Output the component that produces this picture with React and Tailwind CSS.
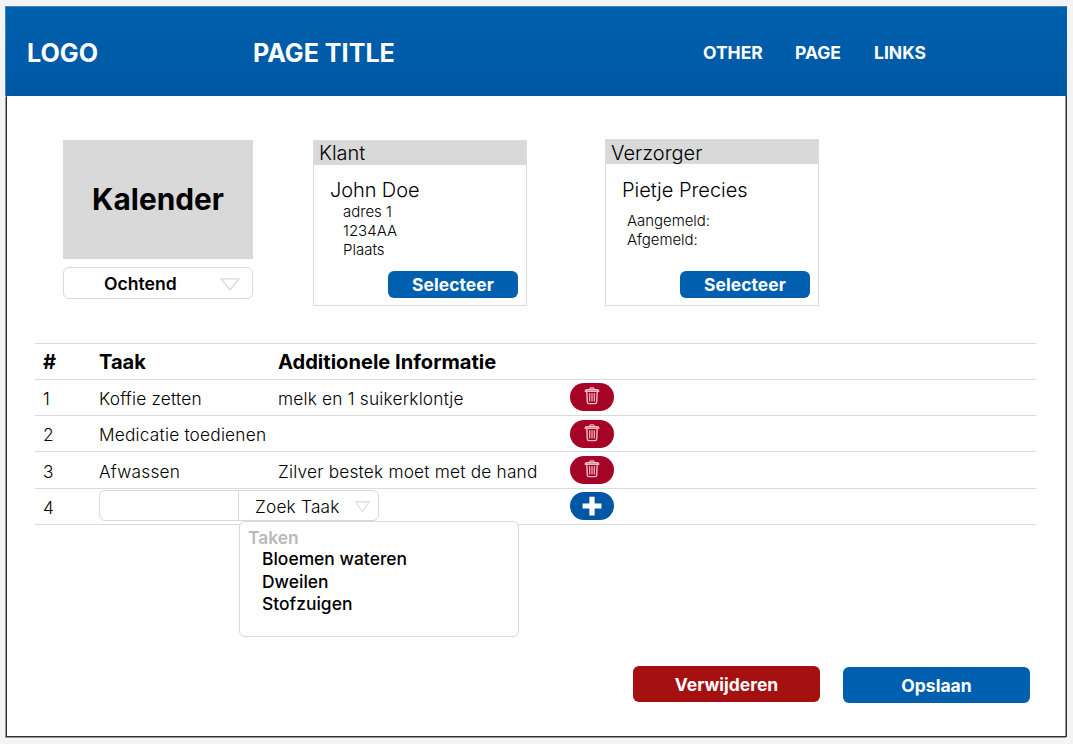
function TriangleDown({ className }) {
  return (
    <svg className={className} viewBox="0 0 20 13" fill="none" stroke="#d9d9d9" strokeWidth="1.3" preserveAspectRatio="none">
      <path d="M1.2 .9H18.8L10 12z" />
    </svg>
  );
}

function TrashIcon() {
  return (
    <svg className="block h-[18px] w-4" viewBox="0 0 16 18" fill="none" stroke="#efbcc7" strokeWidth="1.4" strokeLinecap="round" strokeLinejoin="round">
      <path d="M1.2 4.2C1.2 3 2 2.6 3 2.6H13C14 2.6 14.8 3 14.8 4.2Z" />
      <path d="M5.8 2.4C5.8 1.3 6.3 .9 7 .9H9C9.7 .9 10.2 1.3 10.2 2.4" />
      <path d="M2.8 4.4L3.3 15C3.4 16.2 4 16.6 5 16.6H11C12 16.6 12.6 16.2 12.7 15L13.2 4.4" />
      <path strokeWidth="1.2" d="M5.7 6.6V14M8 6.6V14M10.3 6.6V14" />
    </svg>
  );
}

function DeleteButton({ className }) {
  return (
    <button className={`flex h-7 w-11 items-start justify-center rounded-full bg-[#a50427] pt-1 ${className}`}>
      <TrashIcon />
    </button>
  );
}

function AddButton() {
  return (
    <button className="mt-[3px] flex h-7 w-11 items-center justify-center rounded-full bg-[#0157a6]">
      <svg className="block size-5" viewBox="0 0 20 20" fill="#fff">
        <path d="M7.4 .8H12.6V7.6H19.4V12.6H12.6V19.4H7.4V12.6H.6V7.6H7.4Z" />
      </svg>
    </button>
  );
}

function Card({ title, name, lines, className, nameClass, linesClass }) {
  return (
    <section className={`flex flex-col border border-[#dcdcdc] ${className}`}>
      <h2 className="h-6 bg-[#d9d9d9] pl-[5px] text-[20px] font-light">{title}</h2>
      <p className={`text-[20px] leading-6 font-light ${nameClass}`}>{name}</p>
      <div className={`text-[15px] leading-[19px] font-light ${linesClass}`}>
        {lines.map((line) => (
          <p key={line}>{line}</p>
        ))}
      </div>
      <button className="mt-auto mr-2 mb-[7px] h-[27px] w-[130px] self-end rounded-md bg-[#005faf] text-[17.4px] leading-[28px] font-bold tracking-[.1px] text-white">
        Selecteer
      </button>
    </section>
  );
}

const tasks = [
  { id: 1, task: "Koffie zetten", info: "melk en 1 suikerklontje", row: "h-9 leading-[37px]", button: "mt-[3px]" },
  { id: 2, task: "Medicatie toedienen", info: "", row: "h-9 leading-[37px]", button: "mt-1" },
  { id: 3, task: "Afwassen", info: "Zilver bestek moet met de hand", row: "h-[37px] leading-[39px]", button: "mt-1" },
];

const columns = "grid grid-cols-[64px_179px_292px_1fr] border-t border-[#dadada]";

export default function App() {
  return (
    <div className="h-[744px] w-[1073px] overflow-hidden bg-[#f4f4f4] pt-1.5 pl-[5px] font-['Inter',sans-serif] text-black">
      <header className="flex h-[90px] w-[1062px] items-center border-t border-l border-[#3c86c3] bg-linear-to-b from-[#0060ae] to-[#0057a4] pt-px pl-[21px] font-[650] text-white">
        <div className="w-[226px] pt-px text-[25.1px] leading-8">LOGO</div>
        <h1 className="w-[450px] pt-px text-[25.1px] leading-8">PAGE TITLE</h1>
        <nav className="flex pt-px text-[17.5px] leading-6">
          <a className="w-[92px]">OTHER</a>
          <a className="w-[79px]">PAGE</a>
          <a>LINKS</a>
        </nav>
      </header>

      <main className="ml-px flex h-[641px] w-[1061px] flex-col border-x border-b border-[#2e2e2e] bg-white shadow-[-1px_1px_0_#999,inset_-1px_0_0_#999]">
        <div className="flex h-[247px] items-start pt-[44px] pl-14">
          <div className="flex w-[190px] flex-col">
            <div className="flex h-[119px] items-center justify-center bg-[#d9d9d9] text-[29.8px] font-bold">Kalender</div>
            <button className="mt-2 flex h-8 items-center rounded-md border border-[#d9d9d9] pr-3 pl-10">
              <span className="pt-px text-[17.6px] leading-6 font-semibold">Ochtend</span>
              <TriangleDown className="mt-[3px] ml-auto h-[13px] w-5" />
            </button>
          </div>
          <Card
            className="ml-[60px] h-[166px] w-[214px] [&>h2]:leading-[25px]"
            title="Klant"
            name="John Doe"
            nameClass="mt-[13px] pl-4 tracking-[-.1px]"
            lines={["adres 1", "1234AA", "Plaats"]}
            linesClass="pl-[29px]"
          />
          <Card
            className="-mt-px ml-[78px] h-[167px] w-[214px] [&>h2]:leading-[27px]"
            title="Verzorger"
            name="Pietje Precies"
            nameClass="mt-[14px] pl-4"
            lines={["Aangemeld:", "Afgemeld:"]}
            linesClass="mt-[9px] pl-[21px] tracking-[-.05px]"
          />
        </div>

        <div className="mr-[30px] ml-7 border-b border-[#dadada]">
          <div className={`${columns} h-9 text-[20.1px] leading-9 font-bold`}>
            <span className="pl-2">#</span>
            <span>Taak</span>
            <span>Additionele Informatie</span>
          </div>
          {tasks.map((t) => (
            <div key={t.id} className={`${columns} ${t.row} text-[17.3px] font-light tracking-[.2px] whitespace-nowrap`}>
              <span className="pl-2">{t.id}</span>
              <span>{t.task}</span>
              <span>{t.info}</span>
              <DeleteButton className={t.button} />
            </div>
          ))}
          <div className={`${columns} h-9 text-[17.3px] leading-[38px] font-light tracking-[.2px]`}>
            <span className="pl-2">4</span>
            <div className="relative col-span-2">
              <div className="mt-px flex h-[31px] w-[280px] rounded-md border border-[#d9d9d9] bg-white">
                <input className="w-[138px] rounded-l-md outline-none" />
                <button className="flex flex-1 items-center border-l border-[#d9d9d9] pr-2 pl-4 leading-6">
                  <span className="pt-[2px]">Zoek Taak</span>
                  <TriangleDown className="mt-[3px] ml-auto h-3 w-[15px]" />
                </button>
              </div>
              <div className="absolute top-8 left-[140px] h-[116px] w-[280px] rounded-md border border-[#d9d9d9] bg-white pt-[5px] pl-2 text-[17.4px] leading-[22.5px] font-medium tracking-[.03px]">
                <p className="leading-[21px] font-semibold text-[#b9b9b9]">Taken</p>
                <ul className="pl-[14px]">
                  <li>Bloemen wateren</li>
                  <li>Dweilen</li>
                  <li>Stofzuigen</li>
                </ul>
              </div>
            </div>
            <AddButton />
          </div>
        </div>

        <div className="mt-[141px] flex justify-end gap-[23px] pr-9 text-[17.5px] leading-[37px] font-bold text-white">
          <button className="h-9 w-[187px] rounded-md bg-[#a51010]">Verwijderen</button>
          <button className="mt-px h-9 w-[187px] rounded-md bg-[#005faf]">Opslaan</button>
        </div>
      </main>
    </div>
  );
}
